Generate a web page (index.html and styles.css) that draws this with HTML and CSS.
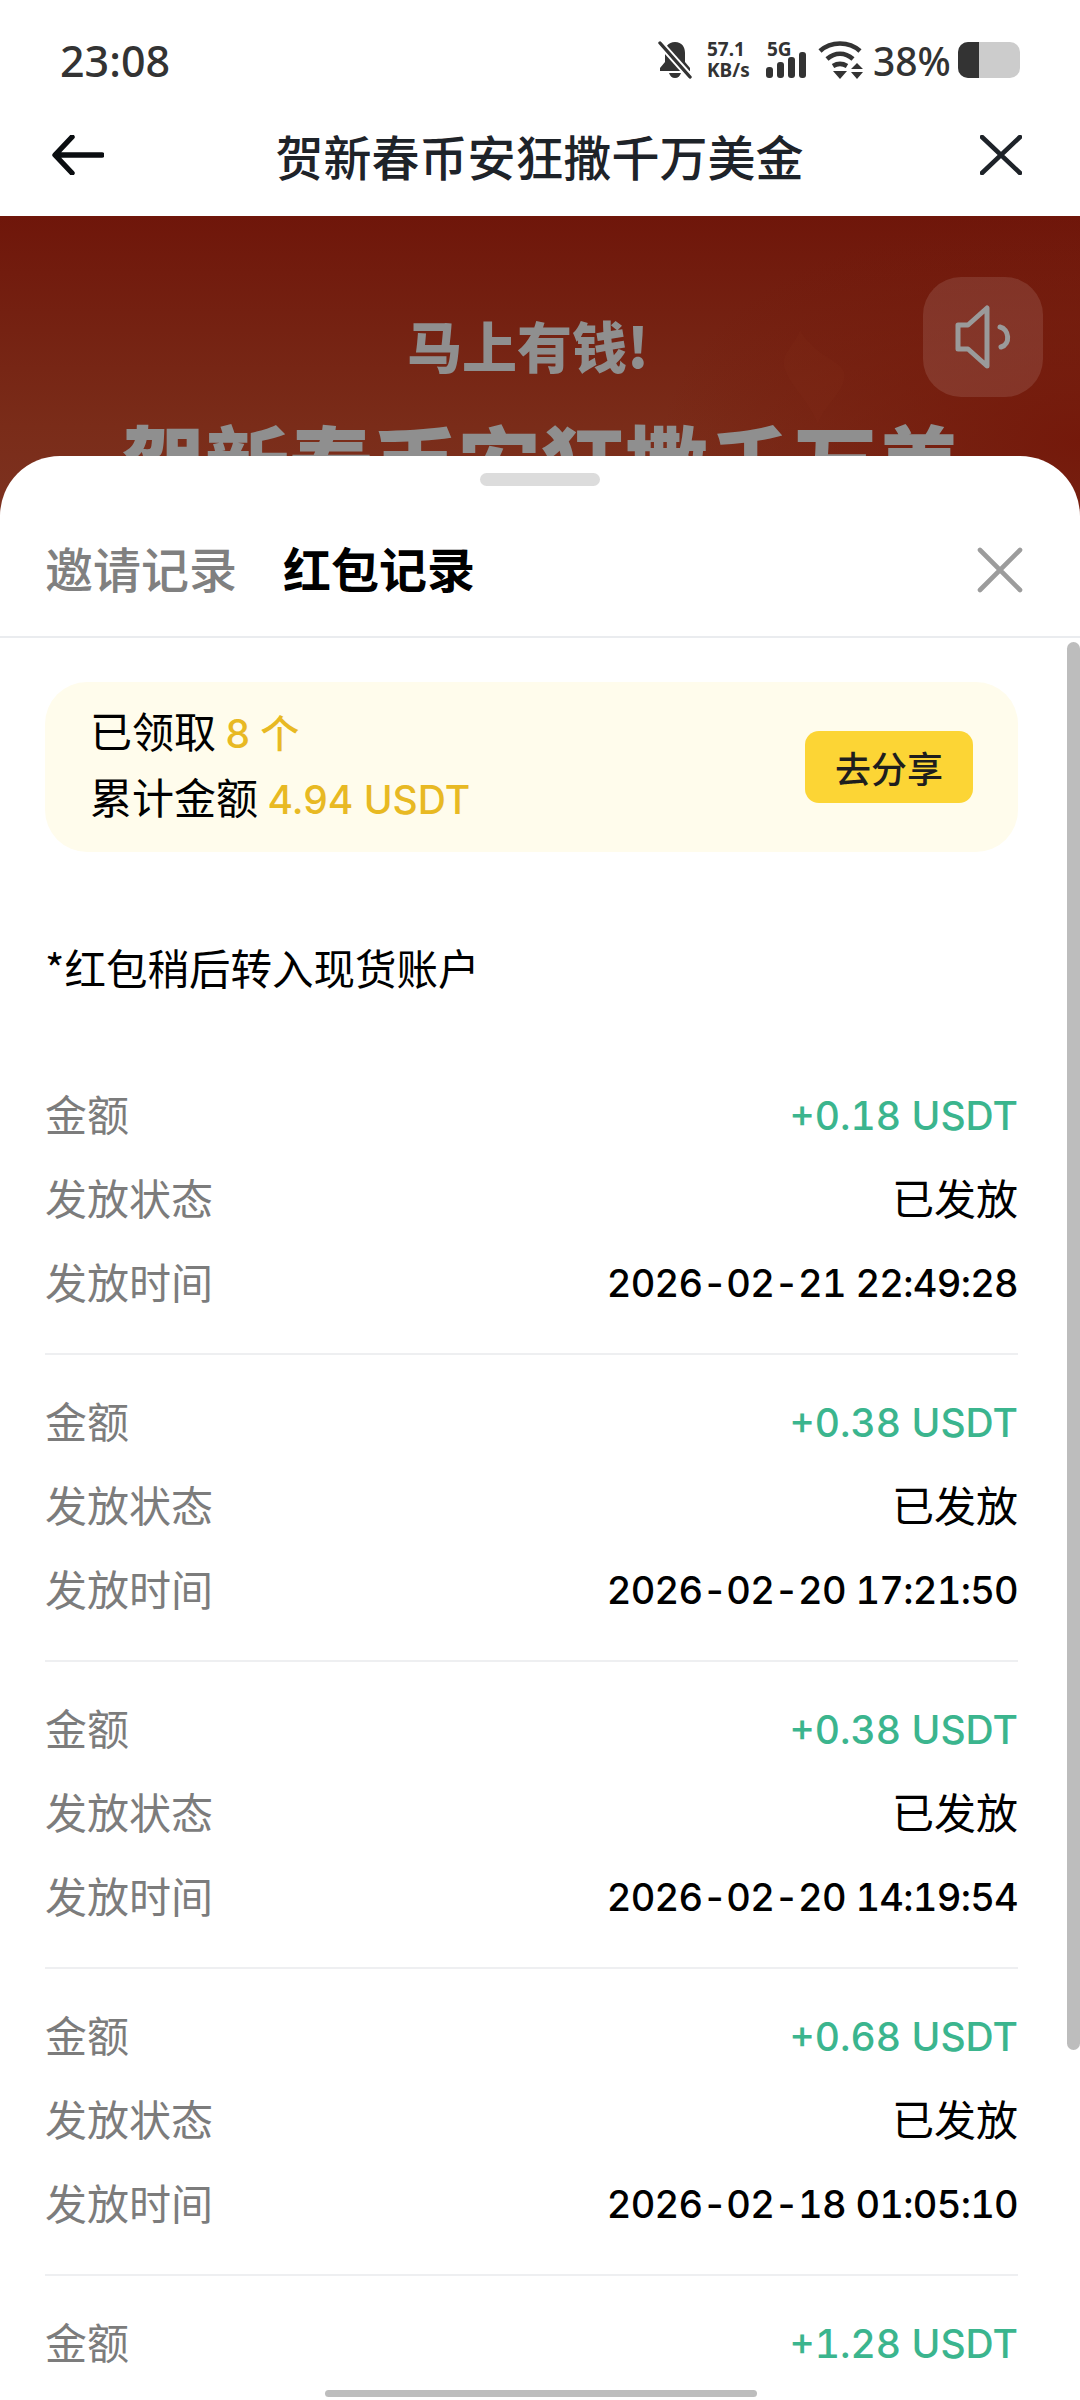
FILE: index.html
```html
<!DOCTYPE html>
<html lang="zh-CN">
<head>
<meta charset="utf-8">
<title>贺新春币安狂撒千万美金</title>
<link rel="stylesheet" href="styles.css">
</head>
<body>
<div class="page">
  <div class="statusbar">
    <span class="time">23:08</span>
    <div class="status-icons">
      <svg class="ic-bell" width="34" height="38" viewBox="0 0 34 38"><path d="M17 1c-7 0-10 5-10 11v9l-5 6v3h30v-3l-5-6v-9C27 6 24 1 17 1zM11 32c1 3 3 5 6 5s5-2 6-5z" fill="#333"/><path d="M1 1 33 37" stroke="#fff" stroke-width="7"/><path d="M2 2 32 36" stroke="#333" stroke-width="3.4" stroke-linecap="round"/></svg>
      <div class="speed"><span>57.1</span><span>KB/s</span></div>
      <div class="signal">
        <span class="fiveg">5G</span>
        <svg width="40" height="26" viewBox="0 0 40 26"><rect x="0" y="15" width="7" height="11" rx="3" fill="#333"/><rect x="11" y="10" width="7" height="16" rx="3" fill="#333"/><rect x="22" y="5" width="7" height="21" rx="3" fill="#333"/><rect x="33" y="0" width="7" height="26" rx="3" fill="#333"/></svg>
      </div>
      <svg class="ic-wifi" width="46" height="38" viewBox="0 0 46 38"><g fill="none" stroke="#333" stroke-width="4.6"><path d="M2 10C13 0 31 0 42 10"/><path d="M9 18c8-7 18-7 26 0"/><path d="M15 25c5-3 9-3 14 0"/></g><path d="M15 30h14l-7 8z" fill="#333"/><path d="M33 28l6-6 6 6zM33 31h12l-6 7z" fill="#333"/></svg>
      <span class="pct">38%</span>
      <div class="battery"><div class="battery-fill"></div></div>
    </div>
  </div>

  <header class="topbar">
    <svg class="icon" width="52" height="40" viewBox="0 0 52 40"><path d="M50 20H4M20 2 3 20l17 18" fill="none" stroke="#0b0e11" stroke-width="5.4" stroke-linecap="round" stroke-linejoin="round"/></svg>
    <h1 class="title">贺新春币安狂撒千万美金</h1>
    <svg class="icon" width="42" height="40" viewBox="0 0 42 40"><path d="M2 2l38 36M40 2 2 38" fill="none" stroke="#1e2329" stroke-width="4.6" stroke-linecap="round"/></svg>
  </header>

  <section class="hero">
    <svg class="flame" width="70" height="94" viewBox="0 0 70 94"><path d="M22 0C16 18 0 24 8 42c8 18 22 28 32 52 6-20 30-34 26-52C62 30 34 24 22 0z" fill="#8a2f1c" opacity=".14"/></svg>
    <div class="hero-main">
      <p class="hero-sub">马上有钱!</p>
      <p class="hero-big">贺新春币安狂撒千万美</p>
    </div>
    <div class="sound">
      <svg width="64" height="66" viewBox="0 0 64 66"><path d="M7 21h10L36 4v58L17 45H7z" fill="none" stroke="#9a9a9a" stroke-width="5" stroke-linejoin="round"/><path d="M49 23c9 2 11 17 1 20" fill="none" stroke="#9a9a9a" stroke-width="5" stroke-linecap="round"/></svg>
    </div>
  </section>

  <main class="sheet">
    <div class="handle"></div>
    <div class="tabs">
      <span class="tab">邀请记录</span>
      <span class="tab tab-active">红包记录</span>
      <svg class="tab-close" width="46" height="46" viewBox="0 0 46 46"><path d="M3 3l40 40M43 3 3 43" fill="none" stroke="#9c9c9c" stroke-width="4.6" stroke-linecap="round"/></svg>
    </div>
    <div class="content">
      <div class="card">
        <div class="card-text">
          <p class="card-line">已领取 <span class="hl">8 个</span></p>
          <p class="card-line">累计金额 <span class="hl">4.94 USDT</span></p>
        </div>
        <button class="share">去分享</button>
      </div>
      <p class="note">*红包稍后转入现货账户</p>

      <div class="record">
        <div class="row"><span class="label">金额</span><span class="value up">+0.18 USDT</span></div>
        <div class="row"><span class="label">发放状态</span><span class="status">已发放</span></div>
        <div class="row"><span class="label">发放时间</span><span class="value">2026-02-21 22:49:28</span></div>
      </div>
      <div class="record">
        <div class="row"><span class="label">金额</span><span class="value up">+0.38 USDT</span></div>
        <div class="row"><span class="label">发放状态</span><span class="status">已发放</span></div>
        <div class="row"><span class="label">发放时间</span><span class="value">2026-02-20 17:21:50</span></div>
      </div>
      <div class="record">
        <div class="row"><span class="label">金额</span><span class="value up">+0.38 USDT</span></div>
        <div class="row"><span class="label">发放状态</span><span class="status">已发放</span></div>
        <div class="row"><span class="label">发放时间</span><span class="value">2026-02-20 14:19:54</span></div>
      </div>
      <div class="record">
        <div class="row"><span class="label">金额</span><span class="value up">+0.68 USDT</span></div>
        <div class="row"><span class="label">发放状态</span><span class="status">已发放</span></div>
        <div class="row"><span class="label">发放时间</span><span class="value">2026-02-18 01:05:10</span></div>
      </div>
      <div class="record">
        <div class="row"><span class="label">金额</span><span class="value up">+1.28 USDT</span></div>
      </div>
    </div>
    <div class="scrollbar"></div>
  </main>
  <div class="home-bar"></div>
</div>
</body>
</html>
```

FILE: styles.css
```css
* { box-sizing: border-box; }
html, body { margin: 0; padding: 0; background: #fff; }
body { font-family: "Inter", "Noto Sans CJK SC", sans-serif; }
p, h1 { margin: 0; font: inherit; }

.page { position: relative; width: 1080px; height: 2400px; overflow: hidden; display: flex; flex-direction: column; background: #fff; }

.statusbar { height: 120px; flex: none; padding: 0 60px; display: flex; align-items: center; justify-content: space-between; color: #333; }
.time { font-family: "Noto Sans", sans-serif; font-size: 43px; font-weight: 500; }
.status-icons { display: flex; align-items: center; }
.ic-bell { margin-right: 15px; }
.speed { display: flex; flex-direction: column; width: 59px; font-family: "Noto Sans", sans-serif; font-size: 19px; line-height: 21px; font-weight: 700; }
.signal { display: flex; flex-direction: column; align-items: flex-start; margin-right: 12px; width: 40px; }
.fiveg { font-family: "Noto Sans", sans-serif; font-size: 19px; line-height: 12px; font-weight: 700; margin-bottom: -3px; margin-left: 1px; }
.ic-wifi { margin-right: 9px; }
.pct { font-family: "Noto Sans", sans-serif; font-size: 39px; font-weight: 500; width: 85px; }
.battery { width: 62px; height: 36px; border-radius: 10px; background: #ccc; overflow: hidden; }
.battery-fill { width: 21px; height: 100%; background: #333; }

.topbar { height: 96px; flex: none; padding: 0 58px 26px 52px; display: flex; align-items: center; justify-content: space-between; }
.title { flex: 1; text-align: center; font-size: 48px; font-weight: 500; color: #1e2329; font-family: "Noto Sans CJK SC", sans-serif; margin-left: -5px; }

.hero { position: relative; height: 300px; flex: none; overflow: hidden; background: radial-gradient(ellipse 420px 240px at 100% 75%, rgba(116,24,10,.95) 0, rgba(116,24,10,0) 100%), linear-gradient(180deg, #6f160a 0%, #7a2c19 70%, #7d3220 100%); }
.flame { position: absolute; left: 778px; top: 114px; }
.hero-main { display: flex; flex-direction: column; align-items: center; padding-top: 88px; margin-left: -24px; }
.hero-sub { font-family: "Noto Sans CJK SC", sans-serif; font-size: 55px; line-height: 80px; font-weight: 900; color: #8f8f8f; }
.hero-big { font-family: "Noto Sans CJK SC", sans-serif; font-size: 84px; line-height: 110px; margin-top: 22px; font-weight: 900; color: #8f8f8f; white-space: nowrap; padding-left: 26px; }
.sound { position: absolute; left: 923px; top: 61px; width: 120px; height: 120px; border-radius: 38px; background: rgba(255,255,255,.11); display: flex; align-items: center; justify-content: center; }

.sheet { position: relative; flex: 1; margin-top: -60px; background: #fff; border-radius: 60px 60px 0 0; overflow: hidden; display: flex; flex-direction: column; }
.handle { width: 120px; height: 13px; border-radius: 7px; background: #dcdcdc; margin: 17px auto 0; flex: none; }
.tabs { height: 152px; flex: none; padding: 12px 57px 0 45px; display: flex; align-items: center; gap: 46px; border-bottom: 2px solid #eaecef; }
.tab { font-family: "Noto Sans CJK SC", sans-serif; font-size: 48px; font-weight: 500; color: #808080; }
.tab-active { font-weight: 700; color: #000; }
.tab-close { margin-left: auto; margin-top: 5px; }

.content { padding: 44px 62px 0 45px; flex: 1; }
.card { height: 170px; padding: 0 45px 0 45px; border-radius: 42px; background: #fffcec; display: flex; align-items: center; justify-content: space-between; }
.card-text { display: flex; flex-direction: column; gap: 20px; padding-bottom: 5px; }
.card-line { font-family: "Noto Sans CJK SC", sans-serif; font-size: 42px; line-height: 42px; color: #000; }
.hl { font-family: "Inter", "Noto Sans CJK SC", sans-serif; color: #e8b923; font-size: 39px; font-weight: 500; }
.share { width: 168px; height: 72px; border: 0; border-radius: 14px; background: #fcd535; color: #1e1e1e; font-family: "Noto Sans CJK SC", sans-serif; font-size: 36px; font-weight: 500; padding: 0; }
.note { margin-top: 90px; font-family: "Noto Sans CJK SC", sans-serif; font-size: 41.5px; line-height: 50px; color: #000; }

.record { padding: 22px 0 31px; border-bottom: 2px solid #eeeff1; }
.note + .record { margin-top: 78px; padding-top: 0; }
.record:last-child { border-bottom: 0; }
.row { height: 84px; display: flex; align-items: center; justify-content: space-between; }
.label { font-family: "Noto Sans CJK SC", sans-serif; font-size: 42px; color: #7c7c7c; }
.value { font-family: "Inter", sans-serif; font-size: 38px; letter-spacing: -0.7px; font-weight: 500; color: #000; font-variant-numeric: tabular-nums; padding-top: 6px; }
.status { font-family: "Noto Sans CJK SC", sans-serif; font-size: 42px; color: #000; }
.value.up { color: #3bb58e; font-size: 39px; letter-spacing: 0; }

.scrollbar { position: absolute; right: 0; top: 186px; width: 13px; height: 1408px; border-radius: 7px; background: #bdbdbd; }
.home-bar { position: absolute; left: 325px; bottom: 3px; width: 432px; height: 7px; border-radius: 4px; background: #bdbdbd; }
```
